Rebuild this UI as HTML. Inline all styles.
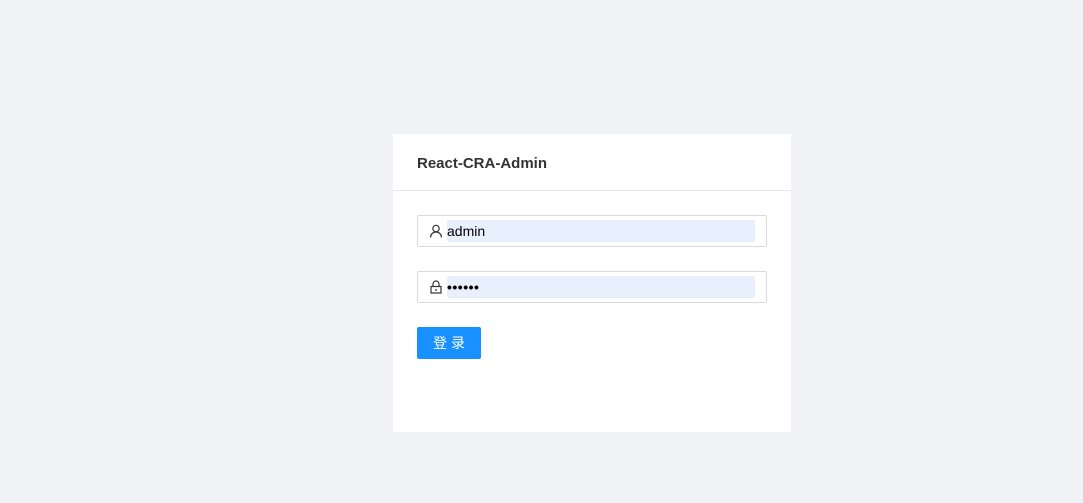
<!DOCTYPE html>
<html><head><style>
body{margin:0;background:#f0f2f5;width:1083px;height:503px;font-family:"Liberation Sans","Noto Sans CJK SC",sans-serif;position:relative;overflow:hidden}
.card{position:absolute;left:393px;top:134px;width:398px;height:298px;background:#fff}
.hd{border-bottom:1px solid #e8e8e8;box-sizing:border-box;height:57px;padding-left:24px;line-height:59px;font-size:15px;color:#262626;font-weight:bold;-webkit-text-stroke:0}
.inp{position:absolute;left:24px;width:350px;height:32px;box-sizing:border-box;border:1px solid #d9d9d9;border-radius:2px}
.fill{position:absolute;left:29px;top:4px;width:308px;height:22px;background:#e8f0fe;border-radius:2px;font-size:14px;line-height:22px;color:#000}
.ic{position:absolute;left:11px;top:8px}
.btn{position:absolute;left:24px;top:193px;width:64px;height:32px;background:#1890ff;border-radius:2px;color:#fff;font-size:14px;text-align:center;line-height:32px;letter-spacing:4px;text-indent:4px}
</style></head><body>
<div class="card">
<div class="hd" style="font-weight:600;color:#333">React-CRA-Admin</div>
<div class="inp" style="top:81px">
<svg class="ic" width="14" height="14" viewBox="0 0 14 14" fill="none" stroke="#333" stroke-width="1.2"><circle cx="7" cy="4.5" r="3.2"/><path d="M1.5 13.5c0-3.2 2.5-5.5 5.5-5.5s5.5 2.3 5.5 5.5"/></svg>
<div class="fill">admin</div></div>
<div class="inp" style="top:137px">
<svg class="ic" width="14" height="14" viewBox="0 0 14 14" fill="none" stroke="#333" stroke-width="1.2"><rect x="2" y="6.5" width="10" height="6.5"/><path d="M4 6.5V4a3 3 0 0 1 6 0v2.5M7 9v2"/></svg>
<div class="fill" style="letter-spacing:0.5px;font-weight:bold">••••••</div></div>
<div class="btn">登录</div>
</div>
</body></html>
